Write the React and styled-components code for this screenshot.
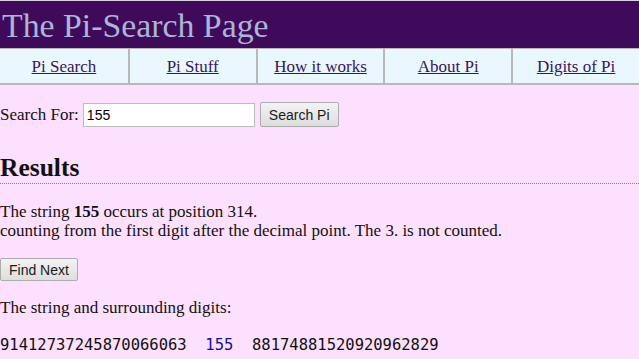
import React from "react";
import styled, { createGlobalStyle } from "styled-components";

const Global = createGlobalStyle`
  html, body { margin: 0; padding: 0; }
  body {
    background: #fde0fd;
    font-family: "Liberation Serif", "Times New Roman", serif;
    font-size: 17px;
    color: #111;
  }
`;

const Header = styled.header`
  box-sizing: border-box;
  height: 48px;
  border-top: 1px solid #d9d0e0;
  background: #400a5b;
  color: #a9b6d6;
  font-size: 33.8px;
  line-height: 39px;
  padding: 5px 0 0 2px;
  white-space: nowrap;
  overflow: hidden;
`;

const Nav = styled.nav`
  display: grid;
  grid-template-columns: repeat(5, 1fr);
  background: #e9f7ff;
  border-top: 1px solid #b8b8b8;
  border-bottom: 2px solid #b8b8b8;
  height: 34px;
`;

const NavCell = styled.div`
  display: flex;
  align-items: center;
  justify-content: center;
  border-left: ${(p) => (p.$first ? "none" : "2px solid #b8b8b8")};
  padding-top: 2px;
`;

const NavLink = styled.a`
  color: #3c1458;
  text-decoration: underline;
  font-size: 17px;
`;

const Main = styled.main`
  padding: 0;
`;

const SearchRow = styled.form`
  display: flex;
  align-items: center;
  height: 25px;
  margin-top: 17px;
  line-height: 19px;
`;

const Label = styled.label`
  margin-right: 4px;
`;

const Input = styled.input`
  box-sizing: border-box;
  width: 172px;
  height: 24px;
  border: 1px solid #bdbdbd;
  background: #fff;
  font-family: "Liberation Sans", Arial, sans-serif;
  font-size: 14px;
  padding: 0 3px;
  margin: 0 5px 0 0;
  outline: none;
`;

const Button = styled.button`
  box-sizing: border-box;
  height: ${(p) => p.$h || 25}px;
  padding: 0 8px;
  border: 1px solid #acacac;
  border-radius: 2px;
  background: linear-gradient(#f3f3f3, #dedede);
  font-family: "Liberation Sans", Arial, sans-serif;
  font-size: 14px;
  color: #1a1a1a;
  cursor: pointer;
`;

const Heading = styled.h2`
  margin: 27px 0 0;
  font-size: 25.5px;
  line-height: 28px;
  font-weight: bold;
  padding-bottom: 1px;
  border-bottom: 1px dotted #ff4a6a;
`;

const Para = styled.p`
  margin: ${(p) => p.$mt || 0}px 0 0;
  line-height: 19px;
`;

const ButtonRow = styled.div`
  margin-top: 18px;
  display: flex;
`;

const Digits = styled.pre`
  margin: 19px 0 0;
  font-family: "DejaVu Sans Mono", "Liberation Mono", monospace;
  font-size: 15.5px;
  line-height: 18px;
  color: #111;
`;

const Hit = styled.span`
  color: #10109a;
`;

const links = ["Pi Search", "Pi Stuff", "How it works", "About Pi", "Digits of Pi"];

export default function App() {
  return (
    <>
      <Global />
      <Header>The Pi-Search Page</Header>
      <Nav>
        {links.map((l, i) => (
          <NavCell key={l} $first={i === 0}>
            <NavLink href="#">{l}</NavLink>
          </NavCell>
        ))}
      </Nav>
      <Main>
        <SearchRow onSubmit={(e) => e.preventDefault()}>
          <Label>Search For:</Label>
          <Input defaultValue="155" />
          <Button type="submit">Search Pi</Button>
        </SearchRow>
        <Heading>Results</Heading>
        <Para $mt={18}>
          The string <b>155</b> occurs at position 314.
          <br />
          counting from the first digit after the decimal point. The 3. is not counted.
        </Para>
        <ButtonRow>
          <Button $h={23}>Find Next</Button>
        </ButtonRow>
        <Para $mt={17}>The string and surrounding digits:</Para>
        <Digits>
          91412737245870066063  <Hit>155</Hit>  88174881520920962829
        </Digits>
      </Main>
    </>
  );
}
